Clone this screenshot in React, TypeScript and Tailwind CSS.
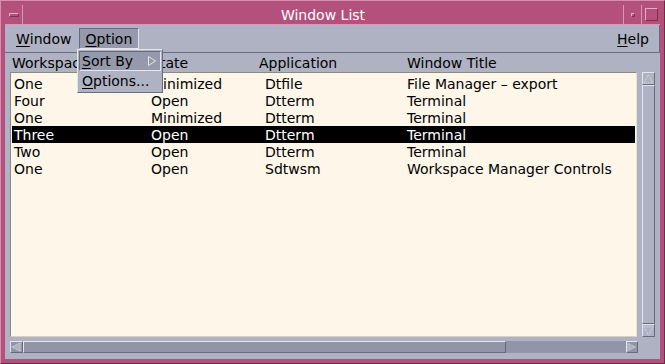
import type { ReactNode } from 'react'

const raised = 'border border-t-[#e4e5ed] border-l-[#e4e5ed] border-r-[#676b7c] border-b-[#676b7c]'
const sunken = 'border border-t-[#676b7c] border-l-[#676b7c] border-r-[#e4e5ed] border-b-[#e4e5ed]'

const rows = [
  ['One', 'Minimized', 'Dtfile', 'File Manager – export'],
  ['Four', 'Open', 'Dtterm', 'Terminal'],
  ['One', 'Minimized', 'Dtterm', 'Terminal'],
  ['Three', 'Open', 'Dtterm', 'Terminal'],
  ['Two', 'Open', 'Dtterm', 'Terminal'],
  ['One', 'Open', 'Sdtwsm', 'Workspace Manager Controls'],
]

function U({ children }: { children: ReactNode }) {
  return <span className="underline decoration-1 underline-offset-[2px]">{children}</span>
}

function Arrow({ dir }: { dir: 'up' | 'down' | 'left' | 'right' }) {
  const pts = {
    up: '6.5,1 1,11 12,11',
    down: '1,1 12,1 6.5,11',
    left: '1,6 11,1 11,11',
    right: '1,1 11,6 1,11',
  }[dir]
  return (
    <svg width="13" height="12" viewBox="0 0 13 12" className="block">
      <polygon points={pts} fill="#aeb2c3" stroke="#e9eaf0" strokeWidth="1" strokeDasharray="1 1" />
    </svg>
  )
}

export default function App() {
  return (
    <div className="relative flex h-[364px] w-[665px] flex-col border border-t-[#d88cae] border-l-[#d88cae] border-r-[#6f2a4a] border-b-[#6f2a4a] bg-[#b4507c] p-[4px] font-['DejaVu_Sans',sans-serif] text-[14px] leading-none text-black">
      {/* title bar */}
      <div className="flex h-[20px] border-b border-b-[#dc96b5]">
        <div className="flex w-[18px] items-center justify-center border-r border-r-[#dc96b5]">
          <div className="h-[4px] w-[10px] border border-t-[#e7a9c4] border-l-[#e7a9c4] border-r-[#7a3153] border-b-[#7a3153] bg-[#b4507c]" />
        </div>
        <div className="flex flex-1 items-center justify-center border-r border-r-[#dc96b5] text-white">
          Window List
        </div>
        <div className="flex w-[18px] items-center justify-center border-r border-r-[#dc96b5]">
          <div className="h-[4px] w-[4px] border border-t-[#e7a9c4] border-l-[#e7a9c4] border-r-[#7a3153] border-b-[#7a3153]" />
        </div>
        <div className="flex w-[18px] items-center justify-center">
          <div className="h-[13px] w-[13px] border border-t-[#e7a9c4] border-l-[#e7a9c4] border-r-[#7a3153] border-b-[#7a3153]" />
        </div>
      </div>

      {/* body */}
      <div className="flex flex-1 flex-col bg-[#aeb2c3]">
        {/* menubar */}
        <div className="flex h-[28px] items-center border-b border-r border-b-[#676b7c] border-r-[#676b7c] pl-[4px] pr-[3px]">
          <div className="flex h-[21px] items-center px-[7px]">
            <U>W</U>indow
          </div>
          <div className={`flex h-[21px] items-center bg-[#9599ab] px-[6px] ${sunken}`}>
            <U>O</U>ption
          </div>
          <div className="flex-1" />
          <div className="flex h-[21px] items-center px-[7px]">
            <U>H</U>elp
          </div>
        </div>

        {/* column headers */}
        <div className="grid h-[19px] grid-cols-[139px_108px_148px_1fr] items-center pl-[7px]">
          <span>Workspace</span>
          <span>State</span>
          <span>Application</span>
          <span>Window Title</span>
        </div>

        {/* list + vertical scrollbar */}
        <div className="flex h-[265px] pl-[5px]">
          <div className="w-[627px] border border-t-[#8d8a82] border-l-[#8d8a82] border-r-[#e9e3d6] border-b-[#d8d0c0] bg-[#fdf6e9] px-[1px] pt-[2px]">
            {rows.map((r, i) => (
              <div
                key={i}
                className={`grid h-[17px] grid-cols-[137px_114px_142px_1fr] items-center pl-[2px] ${i === 3 ? 'bg-black text-white' : ''}`}
              >
                {r.map((c, j) => (
                  <span key={j} className="whitespace-nowrap">{c}</span>
                ))}
              </div>
            ))}
          </div>
          <div className="ml-[5px] flex w-[13px] flex-col">
            <div className={`h-[13px] ${raised} flex items-center justify-center`}>
              <Arrow dir="up" />
            </div>
            <div className={`flex-1 ${raised}`} />
            <div className={`h-[13px] ${raised} flex items-center justify-center`}>
              <Arrow dir="down" />
            </div>
          </div>
        </div>

        {/* horizontal scrollbar */}
        <div className="mt-[4px] ml-[5px] flex h-[12px] w-[628px] bg-[#9195a7]">
          <div className={`w-[13px] ${raised} flex items-center justify-center`}>
            <Arrow dir="left" />
          </div>
          <div className={`w-[483px] ${raised}`} />
          <div className="flex-1" />
          <div className={`w-[12px] ${raised} flex items-center justify-center`}>
            <Arrow dir="right" />
          </div>
        </div>
      </div>

      {/* Option dropdown */}
      <div className={`absolute left-[76px] top-[48px] flex h-[44px] w-[86px] flex-col bg-[#aeb2c3] p-[1px] ${raised}`}>
        <div className={`flex h-[20px] items-center justify-between bg-[#9599ab] pl-[2px] pr-[4px] ${sunken}`}>
          <span>
            <U>S</U>ort By
          </span>
          <svg width="8" height="10" viewBox="0 0 8 10">
            <polygon points="0.5,0.5 7.5,5 0.5,9.5" fill="#9599ab" stroke="#e4e5ed" />
          </svg>
        </div>
        <div className="flex h-[20px] items-center pl-[3px]">
          <U>O</U>ptions...
        </div>
      </div>
    </div>
  )
}
